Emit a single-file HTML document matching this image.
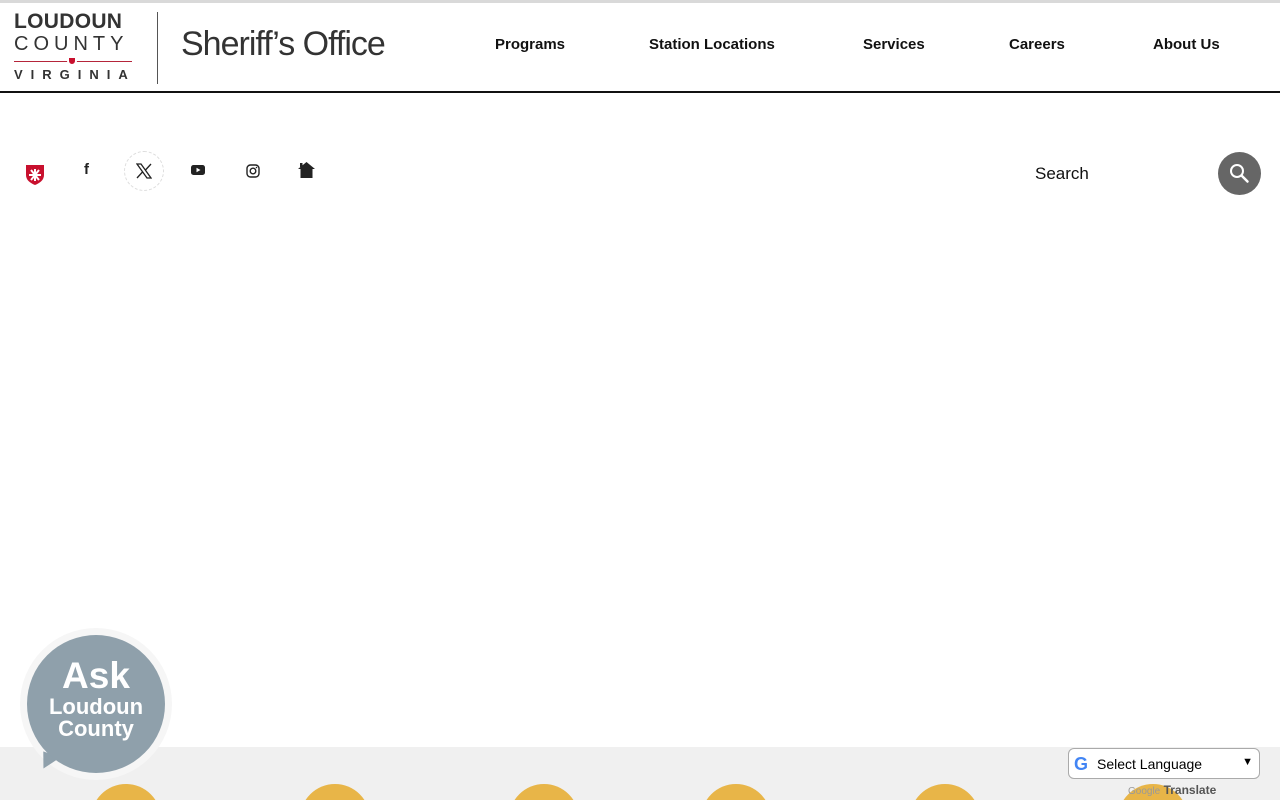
<!DOCTYPE html>
<html style="width:1280px;height:800px;overflow:hidden"><head><meta charset="utf-8">
<style>
*{margin:0;padding:0;box-sizing:border-box}
body{width:1280px;height:800px;overflow:hidden;background:#fff;font-family:"Liberation Sans",sans-serif;position:relative}
.topbar{position:absolute;top:0;left:0;width:1280px;height:3px;background:#d9d9d9}
header{position:absolute;top:3px;left:0;width:1280px;height:90px;border-bottom:2px solid #111}
.lc{position:absolute;left:14px;top:8px;width:118px;color:#333}
.lc .l1{font-size:21px;font-weight:bold;letter-spacing:0.3px;line-height:22px}
.lc .l2{font-size:20px;letter-spacing:5px;line-height:22px}
.lc .rule{position:relative;height:12px}
.lc .rule:before{content:"";position:absolute;left:0;right:0;top:6px;height:1px;background:#b5253a}
.lc .rule span{position:absolute;left:53px;top:1px;width:10px;height:10px;background:#c8102e;border:2px solid #fff;border-radius:0 0 5px 5px}
.lc .l3{font-size:13px;letter-spacing:8px;line-height:16px;font-weight:bold}
.vsep{position:absolute;left:157px;top:9px;width:1px;height:72px;background:#555}
.so{position:absolute;left:181px;top:22px;font-size:34px;color:#333;letter-spacing:-1px}
nav a{position:absolute;top:33px;font-size:15px;font-weight:bold;color:#111;text-decoration:none}
.soc{position:absolute;top:150px}
.search{position:absolute;left:1035px;top:164px;font-size:17px;color:#111}
.sbtn{position:absolute;left:1218px;top:152px;width:43px;height:43px;border-radius:50%;background:#666}
.band{position:absolute;top:747px;left:0;width:1280px;height:53px;background:#f0f0f0;overflow:hidden}
.dot{position:absolute;top:37px;width:70px;height:70px;border-radius:50%;background:#e8b548}
.ask{position:absolute;left:20px;top:628px;width:152px;height:152px;border-radius:50%;background:#f6f6f6}
.ask .c{position:absolute;left:7px;top:7px;width:138px;height:138px;border-radius:50%;background:#8fa0ab;color:#fff;text-align:center;font-weight:bold}
.ask .t{position:absolute;left:20px;top:126px;width:0;height:0;border-left:6px solid transparent;border-right:12px solid transparent;border-top:16px solid #8fa0ab;transform:rotate(20deg)}
.lang{position:absolute;left:1068px;top:748px;width:192px;height:31px;border:1px solid #aaa;border-radius:6px;background:#fff;font-size:14px}
.gt{position:absolute;left:1128px;top:783px;font-size:12px;line-height:14px;color:#555;font-weight:bold}
</style></head><body>
<div class="topbar"></div>
<header>
<div class="lc"><div class="l1">LOUDOUN</div><div class="l2">COUNTY</div><div class="rule"><span></span></div><div class="l3">VIRGINIA</div></div>
<div class="vsep"></div>
<div class="so">Sheriff’s Office</div>
<nav><a style="left:495px">Programs</a><a style="left:649px">Station Locations</a><a style="left:863px">Services</a><a style="left:1009px">Careers</a><a style="left:1153px">About Us</a></nav>
</header>
<svg class="soc" style="left:25px;top:164px" width="20" height="22" viewBox="0 0 20 22"><path d="M1 1h18v10c0 5-4 8-9 10C5 19 1 16 1 11z" fill="#c8102e"/><path d="M10 5v12M4 11h12M6 6l8 10M14 6l-8 10" stroke="#fff" stroke-width="2"/></svg>
<div class="soc" style="left:84px;top:161px;font-size:15px;font-weight:bold;color:#222">f</div>
<div class="soc" style="left:124px;top:151px;width:40px;height:40px;border-radius:50%;border:1px dashed #ddd"></div>
<svg class="soc" style="left:136px;top:163px" width="16" height="16" viewBox="0 0 16 16"><path d="M1 1h4l10 14h-4zM15 1L9.5 7M1 15l5.5-6" stroke="#222" stroke-width="1.3" fill="none"/></svg>
<svg class="soc" style="left:191px;top:165px" width="14" height="10" viewBox="0 0 14 10"><rect width="14" height="10" rx="2.5" fill="#222"/><path d="M5.5 2.8v4.4L9.5 5z" fill="#fff"/></svg>
<svg class="soc" style="left:246px;top:164px" width="14" height="14" viewBox="0 0 14 14"><rect x="1" y="1" width="12" height="12" rx="3.5" stroke="#222" stroke-width="1.4" fill="none"/><circle cx="7" cy="7" r="2.8" stroke="#222" stroke-width="1.4" fill="none"/><circle cx="10.5" cy="3.5" r=".8" fill="#222"/></svg>
<svg class="soc" style="left:297px;top:161px" width="19" height="17" viewBox="0 0 19 17"><path d="M9.5 1L1 8h2.5v9h12V8H18z" fill="#222"/><rect x="3" y="2" width="2.5" height="4" fill="#222"/></svg>
<div class="search">Search</div>
<div class="sbtn"><svg width="43" height="43" viewBox="0 0 43 43"><circle cx="19" cy="19" r="6" stroke="#fff" stroke-width="2" fill="none"/><path d="M23.5 23.5l6 6" stroke="#fff" stroke-width="2.5" stroke-linecap="round"/></svg></div>
<div class="band"><div class="dot" style="left:91px"></div><div class="dot" style="left:300px"></div><div class="dot" style="left:509px"></div><div class="dot" style="left:701px"></div><div class="dot" style="left:910px"></div><div class="dot" style="left:1118px"></div></div>
<div class="ask"><div class="t"></div><div class="c"><div style="font-size:37px;margin-top:21px;line-height:40px">Ask</div><div style="font-size:22px;line-height:22px">Loudoun</div><div style="font-size:22px;line-height:22px">County</div></div></div>
<div class="lang"><span style="position:absolute;left:5px;top:5px;font-weight:bold;font-size:18px;color:#4285f4">G</span><span style="position:absolute;left:28px;top:7px">Select Language</span><span style="position:absolute;right:6px;top:7px;font-size:11px">▼</span></div>
<div class="gt"><span style="color:#999;font-weight:normal;font-size:10px">Google</span> Translate</div>
</body></html>
